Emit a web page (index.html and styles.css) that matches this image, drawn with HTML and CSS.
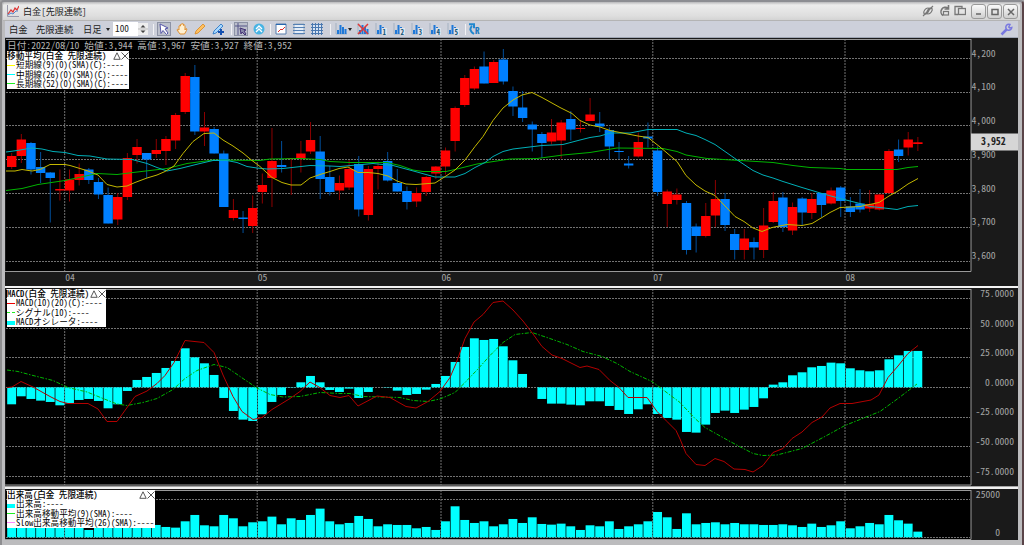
FILE: index.html
```
<!DOCTYPE html>
<html lang="ja">

<head>
    <meta charset="UTF-8">
    <title>白金[先限連続]</title>
    <link rel="stylesheet" href="styles.css">
</head>

<body>
    <div class="window">
        <header class="titlebar">
            <svg class="logo" width="12" height="12" viewBox="0 0 12 12">
                <path d="M.5 0v11.500H12" fill="none" stroke="#99a" />
                <path d="M1 9l3-4 2 2 2-4 2 2 2-4" fill="none" stroke="#d33" stroke-width="1.200" />
                <path d="M1 10l3-2 2 1 3-3 2 0" fill="none" stroke="#58c" />
            </svg>
            <h1>白金[先限連続]</h1>
            <div class="links">
                <svg width="12" height="12" viewBox="0 0 12 12" fill="none" stroke="#777" stroke-width="1.200">
                    <path d="M1 11l10-10M2 8.500c-1-2 1.500-5.500 4-5.500s1 4-2 6zM10 3.500c1 2-1.500 5.500-4 5.500s-1-4 2-6z" />
                </svg>
                <svg width="12" height="12" viewBox="0 0 12 12" fill="none" stroke="#777" stroke-width="1.600">
                    <path d="M10 3a4.500 4.500 0 1 0-5 7.500M10.500 0v4h-4" />
                    <rect x="5.500" y="6.500" width="5" height="3.500" stroke-width="1.200" />
                </svg>
                <svg width="12" height="12" viewBox="0 0 12 12" fill="none" stroke="#777" stroke-width="1.300">
                    <path d="M4 9.500H1v-8h7v1.500" />
                    <rect x="4.500" y="3.500" width="7" height="6" />
                </svg>
            </div>
            <div class="buttons">
                <button><svg width="8" height="8"><path d="M1 6h5" /></svg></button>
                <button><svg width="8" height="8"><path d="M1 1.500h6v5h-6z" /></svg></button>
                <button><svg width="8" height="8"><path d="M1 1l6 6M7 1l-6 6" /></svg></button>
            </div>
        </header>

        <nav class="toolbar">
            <span class="item name">白金</span>
            <span class="item contract">先限連続</span>
            <span class="item foot">日足</span>
            <i class="arrow"></i>
            <span class="count">100</span>
            <span class="spin"><svg width="10" height="12"><path d="M2.500 4.500L5 2l2.500 2.500zM2.500 7.500L5 10l2.500-2.500z" fill="#444" /><path d="M0 6h10" stroke="#bbb" /></svg></span>
            <div class="tools" id="tools"></div>
            <svg class="wrench" width="13" height="13" viewBox="0 0 13 13" fill="none" stroke="#7878e0">
                <path d="M1.500 11.500l5-5" stroke-width="2.500" />
                <path d="M10 1.500a3 3 0 1 0 1.800 3l-2 .5-1-1z" stroke-width="1.500" />
            </svg>
        </nav>

        <main>
            <section class="panel price">
                <svg id="price" width="1013" height="248" viewBox="5 38 1013 248"></svg>
                <p class="info">日付:2022/08/10 始値:3,944 高値:3,967 安値:3,927 終値:3,952</p>
                <div class="legend">
                    <h2>移動平均(白金 先限連続)</h2>
                    <p><i class="line yellow"></i>短期線(9)(0)(SMA)(C):----</p>
                    <p><i class="line cyan"></i>中期線(26)(0)(SMA)(C):----</p>
                    <p><i class="line green"></i>長期線(52)(0)(SMA)(C):----</p>
                    <svg class="close" width="16" height="8" viewBox="0 0 16 8"><path d="M4 .8L.8 7.300h6.400zM8.500.5l7 7M15.500.5l-7 7" /></svg>
                </div>
            </section>
            <section class="panel macd">
                <svg id="macd" width="1013" height="198" viewBox="5 288 1013 198"></svg>
                <div class="legend">
                    <h2>MACD(白金 先限連続)</h2>
                    <p><i class="line red"></i>MACD(10)(20)(C):----</p>
                    <p><i class="line green dash"></i>シグナル(10):----</p>
                    <p><i class="box"></i>MACDオシレータ:----</p>
                    <svg class="close" width="16" height="8" viewBox="0 0 16 8"><path d="M4 .8L.8 7.300h6.400zM8.500.5l7 7M15.500.5l-7 7" /></svg>
                </div>
            </section>
            <section class="panel volume">
                <svg id="volume" width="1013" height="51" viewBox="5 489 1013 51"></svg>
                <div class="legend">
                    <h2>出来高(白金 先限連続)</h2>
                    <p><i class="box"></i>出来高:----</p>
                    <p><i class="line green"></i>出来高移動平均(9)(SMA):----</p>
                    <p><i class="line pink"></i>Slow出来高移動平均(26)(SMA):----</p>
                    <svg class="close" width="16" height="8" viewBox="0 0 16 8"><path d="M4 .8L.8 7.300h6.400zM8.500.5l7 7M15.500.5l-7 7" /></svg>
                </div>
            </section>
        </main>
    </div>
    <script src="chart.js"></script>
</body>

</html>
```
FILE: styles.css
```
* {
    box-sizing: border-box;
}

body {
    margin: 0;
    background: #a6a6a8;
    font-family: "Noto Sans CJK JP", "Liberation Mono", monospace;
    font-feature-settings: "hwid";
    overflow: hidden;
}

h1,
h2,
p {
    margin: 0;
    font-weight: normal;
    white-space: pre;
}

svg {
    display: block;
}

.window {
    width: 1024px;
    height: 545px;
    border-top: 2px solid #8c8d92;
    border-left: 2px solid #8e8e90;
    border-right: 2px solid #5a4448;
    padding: 0 4px 0 3px;
    background: #bcbcbe;
    border-radius: 4px 4px 0 0;
}

.titlebar {
    display: flex;
    align-items: center;
    height: 19px;
    margin: 0 -2px;
    padding: 0 2px 0 4px;
    background: linear-gradient(#b8b8ba, #ececec 3px, #dedede 14px, #d4d4d4);
    border-bottom: 1px solid #b4b4b4;
    border-radius: 4px 4px 0 0;
}

.titlebar h1 {
    margin-left: 4px;
    font-size: 9.1px;
    line-height: 14px;
    color: #222;
    flex: 1;
}

.links {
    display: flex;
    gap: 4px;
    margin-right: 5px;
}

.buttons {
    display: flex;
    gap: 1px;
}

.buttons button {
    width: 15px;
    height: 15px;
    padding: 3px;
    border: 1px solid #999;
    border-radius: 3px;
    background: linear-gradient(#fafafa, #cfcfcf);
}

.buttons path {
    fill: none;
    stroke: #666;
    stroke-width: 1.5;
}

.toolbar {
    display: flex;
    align-items: center;
    height: 17px;
    padding-left: 4px;
    background: #cdd0da;
    border-bottom: 1px solid #9fa6b4;
    color: #222;
    font-size: 9.3px;
    line-height: 15px;
}

.name {
    width: 27px;
}

.contract {
    width: 47px;
}

.foot {
    width: 23px;
}

.arrow {
    width: 0;
    border: 2.5px solid transparent;
    border-top: 3px solid #222;
    border-bottom: 0;
}

.count {
    width: 25px;
    height: 14px;
    margin-left: 3px;
    padding-left: 2px;
    background: #fff;
    font-size: 9.3px;
    line-height: 12px;
}

.spin {
    width: 10px;
    background: #eee;
}

.tools {
    position: relative;
    flex: 1;
    height: 16px;
}

.tools svg {
    position: absolute;
    top: 2px;
}

.tools .on {
    outline: 1px solid #8d93a5;
    background: #bcc0cc;
}

.tools .sep {
    position: absolute;
    top: 3px;
    width: 1px;
    height: 11px;
    background: #f2f2f5;
}

.tools .arrow {
    position: absolute;
    top: 7px;
}

.wrench {
    margin-right: 5px;
}

.panel {
    position: relative;
    background: #1a1a1a;
}

.price {
    height: 248px;
}

.macd {
    height: 201px;
    border-top: 2px solid #f4f4f4;
    border-bottom: 1px solid #a4a4a4;
}

.volume {
    height: 53px;
    border-top: 2px solid #f0f0f0;
}

.legend {
    position: absolute;
    left: 2px;
    background: #fff;
    color: #000;
    font-size: 8.65px;
    font-weight: 500;
    line-height: 9.4px;
}

.legend h2 {
    height: 9.4px;
    font-size: inherit;
    font-weight: 500;
}

.legend p {
    display: flex;
    align-items: center;
    height: 9.4px;
}

.legend i {
    flex: none;
    width: 8px;
    margin-right: 1px;
}

.legend .close {
    position: absolute;
    top: 1px;
    right: 0;
    fill: none;
    stroke: #444;
    stroke-width: .9;
}

.price .legend {
    top: 13px;
    width: 122px;
    height: 38px;
}

.macd .legend {
    top: 1px;
    width: 99px;
    height: 38px;
}

.volume .legend {
    top: 1px;
    width: 148px;
    height: 38px;
}

.line {
    border-top: 1px solid;
}

.box {
    height: 4px;
    margin-top: 3px;
    background: #0ff;
}

.yellow {
    color: #ff0;
}

.cyan {
    color: #0ff;
}

.green {
    color: #2e2;
}

.red {
    color: #e00;
}

.pink {
    color: #f8f;
}

.dash {
    border-top-style: dashed;
}

.info {
    position: absolute;
    left: 2px;
    top: 1px;
    color: #b4b4b4;
    font-size: 9.66px;
    line-height: 12px;
}

/* charts */
.plot {
    fill: #000;
}

.grid {
    stroke: #727272;
    stroke-dasharray: 2 1;
}

.frame {
    fill: none;
    stroke: #999;
}

.axis {
    fill: #a4a4a4;
    font-size: 9.66px;
}

.up {
    fill: #f00;
}

.down {
    fill: #0080ff;
}

.wick-up {
    stroke: #8c0000;
}

.wick-down {
    stroke: #004f9c;
}

.bar {
    fill: #0ff;
}

.curve {
    fill: none;
    stroke-width: 1;
}

.tag {
    fill: #d6d6d6;
}

.tag-text {
    font-size: 9.9px;
    font-weight: bold;
    fill: #222;
}
```
FILE: chart.js
```
const step = 9.64;
const months = [[64.7, "04"], [257.2, "05"], [441, "06"], [652.8, "07"], [845, "08"]];

// direction, high, body top, body bottom, low
const candles = [
    ["u", 153, 156, 167, 169], ["u", 134, 139.5, 156, 163], ["d", 142, 143, 169.5, 174.5], ["d", 152, 167, 173, 183],
    ["d", 172, 172.5, 178, 222.5], ["u", 169.5, 189, 190.5, 200.5], ["u", 169.5, 179.5, 190.5, 201.5], ["u", 163.5, 174, 180, 185.5],
    ["d", 168, 169.5, 180, 184], ["d", 178, 182, 194.5, 199], ["d", 187.5, 195, 223.5, 223.5], ["u", 193, 197, 219.5, 225],
    ["u", 153, 158, 197, 200], ["u", 139, 147, 155, 163.5], ["d", 153, 153, 159.5, 178], ["u", 139, 150, 154, 158],
    ["u", 136, 139, 151, 165], ["u", 113, 115, 140.5, 149], ["u", 73, 76, 112, 114], ["d", 65, 77, 131.5, 135],
    ["u", 112, 127.5, 131.5, 146], ["d", 127, 129, 153.5, 153.5], ["d", 150.5, 153.5, 207, 207], ["u", 199, 210, 218, 220.5],
    ["d", 211, 217.5, 219, 233], ["u", 195.5, 208, 226, 233], ["u", 173.5, 185, 192, 203.5], ["u", 128, 161, 178, 207],
    ["d", 141, 165, 167, 172.5], ["u", 158, 158, 159, 195], ["u", 141, 153.5, 159, 172.5], ["u", 122, 140, 151.5, 154],
    ["d", 136, 151.5, 179, 199], ["d", 166, 177, 192, 195.5], ["u", 175.5, 183, 190.5, 200], ["u", 160, 169, 187.5, 190],
    ["d", 156, 164, 209.5, 216.5], ["u", 166, 169, 215, 220.5], ["u", 161.5, 166, 169, 189.5], ["d", 152, 161, 180.5, 181.5],
    ["d", 169, 183, 191.5, 191.5], ["d", 186.5, 191, 202, 209.5], ["u", 187.5, 193, 201.5, 207], ["u", 176, 177, 192, 196],
    ["u", 166, 166.5, 173.5, 179], ["u", 147.5, 150.5, 166.5, 174.5], ["u", 106.5, 108, 141, 151.5], ["u", 75, 78, 105, 107],
    ["u", 66.5, 69, 88.5, 90], ["d", 51.5, 66.5, 83.5, 83.5], ["u", 60, 62, 83, 83], ["d", 49, 59.5, 81.5, 84.5],
    ["d", 86.5, 91, 106.5, 116], ["d", 91, 107.5, 118, 122], ["d", 121.5, 124.5, 129.5, 151.5], ["d", 132, 134, 143, 158],
    ["u", 119, 132.5, 141.5, 144.5], ["u", 120, 122.5, 140.5, 158.5], ["d", 111, 119, 129.5, 140.5], ["u", 120, 128, 129, 132.5],
    ["u", 98, 114.5, 121, 121], ["d", 112, 123.5, 126.5, 132], ["d", 127.5, 130, 146.5, 159.5], ["d", 142, 151, 152, 159],
    ["d", 156, 163.5, 165.5, 168.5], ["u", 132.5, 142, 156.5, 157.5], ["d", 122.5, 136.5, 138.5, 147.5], ["d", 146.5, 150.5, 192, 196],
    ["u", 189.5, 191.5, 204, 227], ["u", 188.5, 194.5, 200, 204.5], ["d", 201, 203, 250, 254.5], ["d", 223.5, 226.5, 236, 252.5],
    ["u", 203, 216, 236, 237.5], ["u", 180, 199, 215.5, 227], ["d", 193, 199, 225, 231], ["d", 229, 234, 250, 259.5],
    ["u", 229, 238.5, 250, 259.5], ["d", 237.5, 242, 247.5, 259.5], ["u", 208, 225.5, 250, 258], ["u", 192, 201, 222, 223],
    ["d", 192, 197.5, 227, 232], ["u", 202.5, 207, 230.5, 235], ["d", 197, 198.5, 212.5, 225], ["u", 193, 199, 213, 219],
    ["d", 193, 193, 205, 217], ["u", 187.5, 190.5, 203.5, 204.5], ["d", 186, 187.5, 201, 217], ["d", 197, 206.5, 212, 217],
    ["d", 189, 203.5, 209.5, 212.5], ["u", 190, 204, 208.5, 212], ["u", 194, 194.5, 209.5, 210.5], ["u", 149, 151, 193, 194],
    ["d", 139.5, 149.5, 156, 162], ["u", 132, 139.5, 147.5, 155.5], ["u", 137, 142.3, 144, 151]
];

const shortMA = "6,171 15,171 22,169.5 32,171 40,169.5 50,164.5 65,164.5 70,165.5 80,168.5 88,171 98,175 107,184.5 117,187 127,186 135,182.5 147,178 157,175 165,171.5 174,166 183,153.5 193,141.5 204,133.5 214,133 223,140 233,146 243,153 252,160.5 260,166.5 272,177.5 282,182.5 291,185 301,185 310,178 320,174.5 330,171.5 339,168.5 348,167 358,172.5 368,172.5 378,173.5 388,176 397,181 406,184 416,184.5 435,183 446,176 455,170 465,160 475,146.5 483,136.5 493,120.5 503,108 513,100 522,95 532,92.5 542,97.5 560,107.5 572,113.5 580,120.5 590,125 600,127 610,130.5 620,132.5 638,136 648,137.5 660,147 677,161.5 686,175.5 696,185 705,191 715,195.5 725,206 735,216.5 744,221.5 753,228 762,231.5 772,227.5 787,224.5 802,225.5 812,223.5 822,217.5 830,212.5 840,207.5 860,206.5 879,202.5 889,196 898,191 908,184 918,178.5";
const middleMA = "6,152 17,150.5 32,148 42,149 53,151.5 65,152.5 78,155.5 90,156 107,159 132,159.5 147,163.5 157,167.5 167,171 180,168.5 200,163.5 213,160.5 227,160.5 237,162.5 247,166.5 257,168 267,169 283,168.5 310,165.5 330,166 340,166.5 373,163.5 393,165.5 417,172 435,177 455,177 465,173.5 475,167.5 485,162.5 493,156.5 503,151.5 513,149 542,145.5 563,144.5 580,140 590,137.5 600,136 610,133 630,133 648,129.5 677,129.5 686,133 696,135.5 705,139.5 715,144.5 725,151.5 735,158.5 744,164.5 753,170.5 763,175 773,178 783,181.5 802,187.5 822,193.5 840,198.5 860,203.5 870,206.5 880,207.5 897,209.5 908,206.5 918,205.5";
const longMA = "6,190.5 22,188.5 38,184.5 65,180.5 88,175.5 97,173.5 117,174.5 133,172.5 167,168.5 187,163.5 213,160 260,160.5 270,159 300,158.5 320,159.5 330,161.5 350,162.5 387,162.5 400,165.5 413,170 423,171.5 446,171.5 455,169.5 477,164 510,159 537,158.5 563,155 590,152.5 617,148 663,148.5 677,151.5 686,155 707,158.5 740,160.5 773,162.5 793,165.5 810,167.5 840,168.5 847,169.5 897,169.5 908,167.5 918,166.5";
const macdLine = "7,387.5 12,387 21,381.5 33,387 50,396.5 60,401.5 68,403.5 88,403.5 98,409 107,421.5 117,421.5 135,396.5 147,391 157,383.5 165,375.5 174,362.5 185,340.5 204,342.5 214,352.5 223,375 233,396.5 242,411.5 253,419.5 262,417.5 272,409.5 290,398.5 300,391.5 310,382 319,387 330,395.5 340,397.5 349,395.5 358,406 377,396 390,397.5 406,406.5 416,408 428,401.5 440,391.5 450,377.5 456,363.5 465,338.5 474,322 483,314.5 493,302.5 503,301 513,310 523,321 533,334 542,346.5 552,355 562,358.5 580,367.5 587,366 599,369.5 610,380.5 619,387.5 628,397.5 647,397.5 657,411.5 667,421.5 676,430.5 680,439 686,453.5 696,464.5 705,465.5 715,458.5 724,461.5 734,469 745,469.5 753,472 763,465.5 773,452.5 783,448.5 792,438.5 802,432 812,422.5 822,417 830,408 840,403.5 852,403.5 871,400 879,395 888,377.5 898,366 908,353.5 918,345.5";
const signalLine = "7,370 18,371.5 33,375.5 53,380.5 68,387.5 87,392 103,398.5 117,404 127,405.5 143,402.5 157,398.5 173,389.5 185,378.5 197,370.5 214,364.5 227,367.5 243,378.5 257,388 270,394.5 283,397 300,396.5 320,392.5 340,393.5 350,393.5 363,396.5 400,397.5 413,400.5 428,401.5 440,399 455,392.5 465,382.5 477,370 490,355.5 503,342.5 515,334.5 532,332.5 547,337.5 567,344.5 583,351.5 602,356.5 617,363.5 630,371.5 652,381.5 680,402.5 695,418.5 705,427.5 730,441.5 753,453.5 763,455.5 777,455 802,448.5 823,437.5 845,425.5 880,411.5 898,398.5 917,384";

// bar lengths, a third of a pixel each
const oscillator = [-51, -27, -35, -40, -44, -54, -48, -38, -35, -41, -63, -51, -11, 22, 31, 43, 58, 79, 117, 90, 72, 37, -32, -71, -97, -101, -81, -44, -23, -1, 15, 34, 15, -8, -14, -4, -32, -14, 0, -1, -10, -23, -20, -7, 10, 34, 76, 121, 147, 142, 145, 123, 81, 40, 0, -35, -49, -49, -52, -54, -42, -42, -56, -68, -80, -66, -51, -80, -92, -97, -134, -136, -112, -77, -70, -77, -67, -59, -33, 8, 15, 36, 45, 60, 64, 74, 72, 57, 51, 48, 51, 84, 96, 109, 109];
const volumes = [30, 30, 30, 30, 30, 30, 30, 30, 22, 30, 30, 30, 30, 30, 30, 37, 31, 29, 48, 67, 36, 33, 67, 57, 33, 45, 48, 62, 39, 57, 52, 67, 86, 48, 39, 43, 64, 55, 33, 39, 37, 37, 27, 31, 22, 48, 93, 52, 43, 48, 33, 39, 55, 43, 60, 40, 38, 41, 33, 22, 36, 33, 48, 25, 33, 39, 48, 76, 60, 25, 72, 39, 43, 45, 39, 43, 39, 39, 37, 37, 39, 36, 31, 41, 31, 36, 48, 27, 33, 43, 39, 67, 51, 41, 17];

function rect(cls, x, y, w, h) {
    return `<rect class="${cls}" x="${x}" y="${y}" width="${w}" height="${h}"/>`;
}

function line(cls, x1, y1, x2, y2) {
    return `<line class="${cls}" x1="${x1}" y1="${y1}" x2="${x2}" y2="${y2}"/>`;
}

function text(cls, x, y, str, anchor) {
    return `<text class="${cls}" x="${x}" y="${y}" text-anchor="${anchor || "start"}">${str}</text>`;
}

function curve(points, color, extra) {
    return `<polyline class="curve" points="${points}" stroke="${color}" ${extra || ""}/>`;
}

function grid(rows, top, bottom) {
    let out = rect("plot", 6, top, 965, bottom - top);
    rows.forEach(y => out += line("grid", 6, y, 970, y));
    months.forEach(m => out += line("grid", m[0], top, m[0], bottom));
    return out + `<path class="frame" d="M6 ${top + .5}H971M971 ${top}V${bottom}H5"/>`;
}

function bars(values, zero) {
    return values.map((v, i) => {
        const h = Math.abs(v) / 3;
        return rect("bar", (7.2 + i * step).toFixed(2), v > 0 ? zero - h : zero, 8.9, h);
    }).join("");
}

function drawPrice() {
    let out = grid([58.5, 92.5, 125.5, 159.5, 193.5, 227.5, 261.5], 39, 271.5);
    candles.forEach((c, i) => {
        const x = 11.7 + i * step;
        const up = c[0] == "u";
        out += line(up ? "wick-up" : "wick-down", x, c[1], x, c[4]);
        out += rect(up ? "up" : "down", x - 4.7, c[2], 9.4, c[3] - c[2]);
    });
    out += curve(longMA, "#00b400") + curve(middleMA, "#00b0b8") + curve(shortMA, "#c4b800");
    months.forEach(m => out += text("axis", m[0] + .5, 280.5, m[1]));
    ["4,200", "4,100", "4,000", "3,900", "3,800", "3,700", "3,600"].forEach((t, i) => {
        out += text("axis", 971.5, 56.5 + i * 33.75, t);
    });
    out += rect("tag", 971, 133.5, 47, 17) + text("tag-text", 981, 145, "3,952");
    document.querySelector("#price").innerHTML = out;
}

function drawMacd() {
    let out = grid([298.5, 328.5, 357.5, 387.5, 417.5, 446.5, 476.5], 289, 485);
    out += bars(oscillator, 387.3);
    out += curve(signalLine, "#00b400", 'stroke-dasharray="4 1.5 1.5 1.5"') + curve(macdLine, "#b40000");
    ["75.0000", "50.0000", "25.0000", "0.0000", "-25.0000", "-50.0000", "-75.0000"].forEach((t, i) => {
        out += text("axis", 1014, 297 + i * 29.6, t, "end");
    });
    document.querySelector("#macd").innerHTML = out;
}

function drawVolume() {
    let out = grid([499.5, 537.5], 490, 539.5);
    out += bars(volumes, 537.3);
    out += text("axis", 1000, 498, "25000", "end") + text("axis", 1000, 535.5, "0", "end");
    document.querySelector("#volume").innerHTML = out;
}

// toolbar icons, x is the offset from the left of the strip
const chartIcon = '<path d="M1 0v11h11" fill="none" stroke="#9ab" stroke-width=".8"/><path d="M2 11V7h2v4M4.500 11V2h2v9M7 11V4h2v7M9.500 11V6h2v5" fill="#1e78d8"/>';

function numbered(n) {
    return chartIcon + `<rect x="7" y="5" width="5" height="7" fill="#dde4ee"/><text x="7.5" y="11.5" font-size="7" font-weight="bold" fill="#157">${n}</text>`;
}

const icons = [
    [10, '<path d="M2 1l8 4-3 1 3 4-1.500 1.500-3.500-4-2 3z" fill="#fff" stroke="#5656a8"/>', "on"],
    [28, '<path d="M3 7V3q1-1 1.500 0V1.500q1-1 1.500 0V1q1-1 1.500 0v1.500q1-1 1.500 0V7l1-1.500q1.500 0 .5 2L8.500 11H4L1 7q0-1.500 2 0z" fill="#fff0d0" stroke="#e09030"/>'],
    [46, '<path d="M1 11l1-3 7-7 2 2-7 7z" fill="#ffc060" stroke="#d88820" stroke-width=".8"/>'],
    [64, '<path d="M1 11l1-3 7-7 2 2-7 7z" fill="#a8d8ff" stroke="#2070c0" stroke-width=".8"/><path d="M9 6v6M6 9h6" stroke="#1450b0" stroke-width="2"/>'],
    [87, '<path d="M3 0v12M0 3h12" stroke="#558"/><path d="M5 5l6 2-2 1 2 3-1 1-3-3-1 2z" fill="#88a" stroke="#437"/>', "on"],
    [105, '<circle cx="6" cy="6" r="5.500" fill="#48b4e4"/><path d="M3 6l3-3 3 3M3 9l3-3 3 3" fill="none" stroke="#fff" stroke-width="1.300"/>'],
    [127, '<path d="M1 1h10v10H1z" fill="#fff" stroke="#567cac"/><path d="M1 1.500h10" stroke="#2868b0"/><path d="M3 9l3-3 1 1 3-3" fill="none" stroke="#e43030"/>'],
    [145, '<path d="M1 1h10v10H1z" fill="#e4edf8" stroke="#9ab"/><path d="M0 1.500h12M0 4.500h12M0 7.500h12M0 10.500h12" stroke="#5580b4"/>'],
    [163, '<path d="M1 1h10v10H1z" fill="#d8e4f4"/><path d="M0 1.500h12M0 4.500h12M0 7.500h12M0 10.500h12M1.500 0v12M4.500 0v12M7.500 0v12M10.500 0v12" stroke="#4a78b0"/>'],
    [187, chartIcon],
    [209, chartIcon + '<path d="M1 1l10 10M11 1L1 11" stroke="#e03838" stroke-width="1.500"/>'],
    [227, numbered(1)],
    [245, numbered(2)],
    [263, numbered(3)],
    [281, numbered(4)],
    [299, numbered(5)],
    [321, '<path d="M5 11Q-1 7 3 3M0 1.200h5v4" fill="none" stroke="#2088d0" stroke-width="2"/><text x="6" y="10.500" font-size="9" font-weight="bold" fill="#1878c0">R</text>']
];

function drawTools() {
    const box = document.querySelector("#tools");
    icons.forEach(icon => {
        box.innerHTML += `<svg class="${icon[2] || ""}" style="left:${icon[0]}px" width="12" height="12" viewBox="0 0 12 12">${icon[1]}</svg>`;
    });
    [5, 83, 122, 182, 317].forEach(x => {
        box.innerHTML += `<i class="sep" style="left:${x}px"></i>`;
    });
    box.innerHTML += '<i class="arrow" style="left:200px"></i>';
}

drawTools();
drawPrice();
drawMacd();
drawVolume();
```
